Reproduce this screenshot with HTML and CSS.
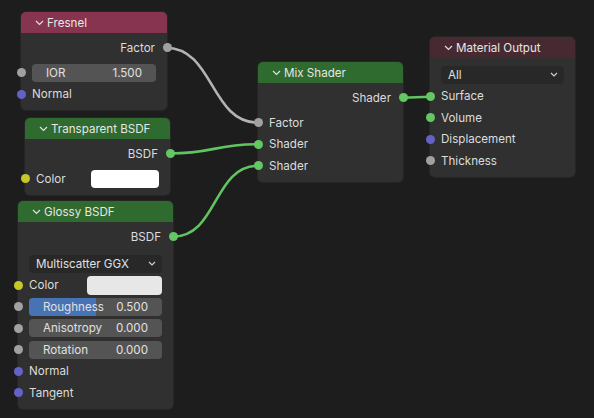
FILE: index.html
```html
<!DOCTYPE html>
<html>
<head>
<meta charset="utf-8">
<link rel="stylesheet" href="styles.css">
</head>
<body>
<div class="canvas">
  <svg class="wires" width="594" height="418" viewBox="0 0 594 418">
    <path class="wire grey" d="M165.7,47.7 C214,47.7 210,122.7 258.3,122.7"/>
    <path class="wire green" d="M169.3,153.5 C214,153.5 214,144.3 258.3,144.3"/>
    <path class="wire green" d="M172.7,236.7 C218,236.7 213,165.7 258.3,165.7"/>
    <path class="wire green" d="M402.7,97.7 C416,97.7 416,96.7 430.7,96.7"/>
  </svg>

  <div class="node fresnel">
    <div class="header hdr-red"><svg class="chev" width="9" height="6" viewBox="0 0 9 6"><polyline points="1,1 4.5,4.5 8,1"/></svg><span>Fresnel</span></div>
    <div class="body">
      <div class="group">
        <div class="row out"><span>Factor</span><i class="sock s-grey right"></i></div>
      </div>
      <div class="group gap">
        <div class="row"><i class="sock s-grey left"></i><div class="field"><span>IOR</span><span>1.500</span></div></div>
        <div class="row"><i class="sock s-purple left"></i><span>Normal</span></div>
      </div>
    </div>
  </div>

  <div class="node transparent">
    <div class="header hdr-green"><svg class="chev" width="9" height="6" viewBox="0 0 9 6"><polyline points="1,1 4.5,4.5 8,1"/></svg><span>Transparent BSDF</span></div>
    <div class="body">
      <div class="group">
        <div class="row out"><span>BSDF</span><i class="sock s-green right"></i></div>
      </div>
      <div class="group gap">
        <div class="row"><i class="sock s-yellow left"></i><span class="lbl">Color</span><div class="swatch white"></div></div>
      </div>
    </div>
  </div>

  <div class="node glossy">
    <div class="header hdr-green"><svg class="chev" width="9" height="6" viewBox="0 0 9 6"><polyline points="1,1 4.5,4.5 8,1"/></svg><span>Glossy BSDF</span></div>
    <div class="body">
      <div class="group">
        <div class="row out"><span>BSDF</span><i class="sock s-green right"></i></div>
      </div>
      <div class="group gap-lg">
        <div class="row"><div class="dropdown"><span>Multiscatter GGX</span><svg class="dd-arrow" width="8" height="5" viewBox="0 0 8 5"><polyline points="1,1 4,4 7,1"/></svg></div></div>
        <div class="row"><i class="sock s-yellow left"></i><span class="lbl">Color</span><div class="swatch light"></div></div>
        <div class="row"><i class="sock s-grey left"></i><div class="field slider"><div class="fill" style="width:50%"></div><span>Roughness</span><span>0.500</span></div></div>
        <div class="row"><i class="sock s-grey left"></i><div class="field"><span>Anisotropy</span><span>0.000</span></div></div>
        <div class="row"><i class="sock s-grey left"></i><div class="field"><span>Rotation</span><span>0.000</span></div></div>
        <div class="row"><i class="sock s-purple left"></i><span>Normal</span></div>
        <div class="row"><i class="sock s-purple left"></i><span>Tangent</span></div>
      </div>
    </div>
  </div>

  <div class="node mix">
    <div class="header hdr-green"><svg class="chev" width="9" height="6" viewBox="0 0 9 6"><polyline points="1,1 4.5,4.5 8,1"/></svg><span>Mix Shader</span></div>
    <div class="body">
      <div class="group">
        <div class="row out"><span>Shader</span><i class="sock s-green right"></i></div>
      </div>
      <div class="group gap">
        <div class="row"><i class="sock s-grey left"></i><span>Factor</span></div>
        <div class="row"><i class="sock s-green left"></i><span>Shader</span></div>
        <div class="row"><i class="sock s-green left"></i><span>Shader</span></div>
      </div>
    </div>
  </div>

  <div class="node output">
    <div class="header hdr-maroon"><svg class="chev" width="9" height="6" viewBox="0 0 9 6"><polyline points="1,1 4.5,4.5 8,1"/></svg><span>Material Output</span></div>
    <div class="body top-lg">
      <div class="group">
        <div class="row"><div class="dropdown"><span>All</span><svg class="dd-arrow" width="8" height="5" viewBox="0 0 8 5"><polyline points="1,1 4,4 7,1"/></svg></div></div>
        <div class="row"><i class="sock s-green left"></i><span>Surface</span></div>
        <div class="row"><i class="sock s-green left"></i><span>Volume</span></div>
        <div class="row"><i class="sock s-purple left"></i><span>Displacement</span></div>
        <div class="row"><i class="sock s-grey left"></i><span>Thickness</span></div>
      </div>
    </div>
  </div>
</div>
</body>
</html>
```
FILE: styles.css
```css
html, body {
  margin: 0;
  padding: 0;
  background: #1d1d1d;
}
body {
  font-family: Inter, "DejaVu Sans", sans-serif;
  font-size: 11.6px;
  color: #dcdcdc;
}
.canvas {
  position: relative;
  width: 594px;
  height: 418px;
  overflow: hidden;
  background: #1d1d1d;
}
.wires {
  position: absolute;
  left: 0;
  top: 0;
}
.wire {
  fill: none;
  stroke-width: 2.6;
  stroke-linecap: round;
}
.wire.grey { stroke: #b3b3b3; }
.wire.green { stroke: #60c460; }

.node {
  position: absolute;
  background: #303030;
  border-radius: 5px;
  box-shadow: 0 0 0 1px #262626;
}
.fresnel { left: 21px; top: 12px; width: 146px; }
.transparent { left: 25px; top: 118px; width: 145px; }
.glossy { left: 18px; top: 201px; width: 155px; }
.mix { left: 258px; top: 62px; width: 145px; }
.output { left: 430px; top: 37px; width: 145px; }

.header {
  height: 21px;
  display: flex;
  align-items: center;
  padding-left: 14px;
  gap: 3px;
  border-radius: 5px 5px 0 0;
  color: #e6e6e6;
}
.hdr-red { background: #873450; }
.hdr-green { background: #2f6a2f; }
.hdr-maroon { background: #472a31; }
.chev {
  fill: none;
  stroke: #e0e0e0;
  stroke-width: 1.2;
}
.body {
  display: flex;
  flex-direction: column;
  padding: 4px 0 5px;
}
.body.top-lg { padding-top: 6px; }
.group {
  display: flex;
  flex-direction: column;
}
.group.gap { margin-top: 3.5px; }
.group.gap-lg { margin-top: 5.5px; }
.row {
  position: relative;
  height: 21.5px;
  display: flex;
  align-items: center;
  padding: 0 11px;
}
.row.out {
  justify-content: flex-end;
  padding-right: 12px;
}
.sock {
  position: absolute;
  top: 50%;
  width: 9px;
  height: 9px;
  margin-top: -4.5px;
  border-radius: 50%;
}
.sock.left { left: -4.5px; }
.sock.right { right: -4.5px; }
.s-grey { background: #a1a1a1; }
.s-green { background: #63c763; }
.s-purple { background: #6363c7; }
.s-yellow { background: #c7c729; }

.field {
  position: relative;
  flex: 1;
  height: 18px;
  background: #545454;
  border-radius: 4px;
  display: flex;
  align-items: center;
  justify-content: space-between;
  padding: 0 14px 0 14px;
  overflow: hidden;
  color: #e0e0e0;
}
.field span { position: relative; }
.field .fill {
  position: absolute;
  left: 0;
  top: 0;
  bottom: 0;
  background: #4772b3;
}
.dropdown {
  flex: 1;
  height: 18px;
  background: #282828;
  border-radius: 4px;
  display: flex;
  align-items: center;
  justify-content: space-between;
  padding: 0 6px 0 7px;
  color: #e0e0e0;
}
.dd-arrow {
  fill: none;
  stroke: #cfcfcf;
  stroke-width: 1.2;
}
.lbl { flex: 1; }
.swatch {
  height: 18.5px;
  border-radius: 4px;
}
.transparent .swatch { width: 68.5px; }
.glossy .swatch { width: 75px; }
.swatch.white { background: #ffffff; }
.swatch.light { background: #e7e7e7; }
```
